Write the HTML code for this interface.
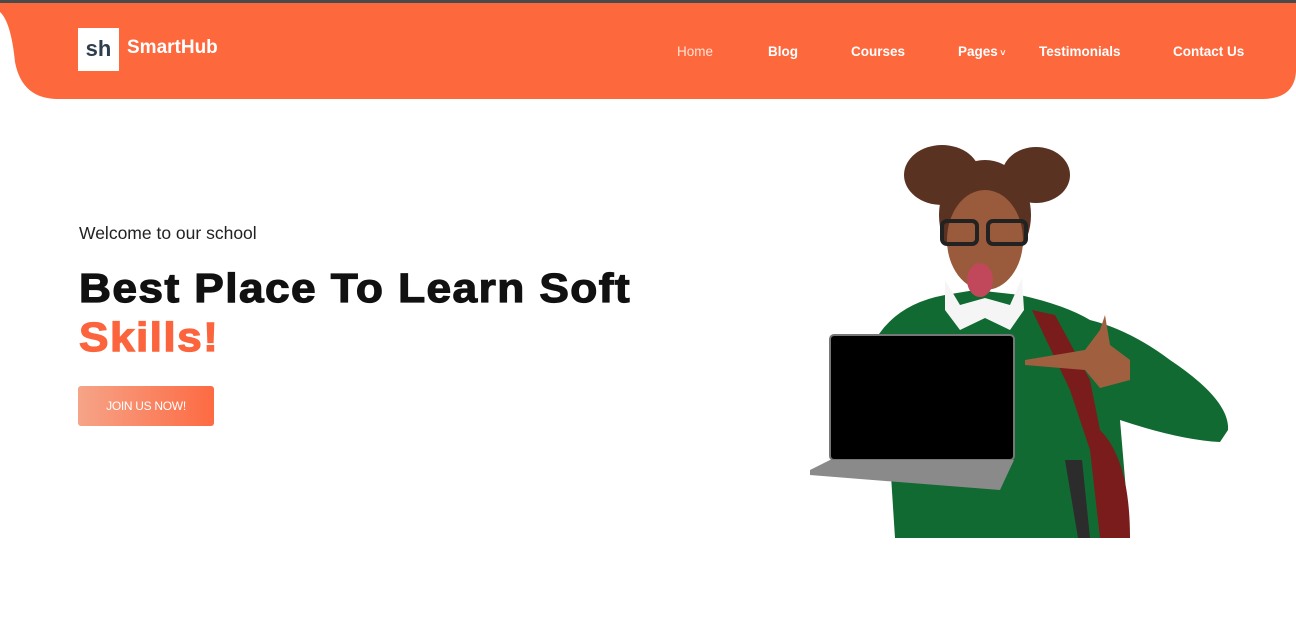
<!DOCTYPE html>
<html><head><meta charset="utf-8"><style>
*{margin:0;padding:0;box-sizing:border-box}
body{width:1296px;height:618px;overflow:hidden;background:#fff;font-family:"Liberation Sans",Arial,sans-serif;position:relative}
.top{position:absolute;left:0;top:0;width:1296px;height:3px;background:#4a4a4a}
.logo{position:absolute;left:78px;top:28px;width:41px;height:43px;background:#fff;color:#2f3e4d;font-weight:bold;font-size:22px;text-align:center;line-height:42px}
.brand{position:absolute;left:127px;top:37px;color:#fff;font-weight:bold;font-size:19px}
.nav a{position:absolute;top:44px;color:#fff;font-size:13.5px;font-weight:bold;text-decoration:none}
.wel{position:absolute;left:79px;top:223px;font-size:17.5px;color:#222}
h1{position:absolute;left:79px;top:264px;font-size:41px;line-height:49px;font-weight:900;color:#111;letter-spacing:1.3px;transform:scaleX(1.08);transform-origin:left;-webkit-text-stroke:1.2px #111;white-space:nowrap}
h1 span{color:#fb643c;-webkit-text-stroke:1.2px #fb643c}
.btn{position:absolute;left:78px;top:386px;width:136px;height:40px;border-radius:3px;background:linear-gradient(90deg,#f6a488,#fd6a42);color:#fff;font-size:12px;text-align:center;line-height:40px;letter-spacing:-.3px}
</style></head><body>
<svg width="1296" height="110" style="position:absolute;left:0;top:0">
<path d="M0,3 L1296,3 L1296,72 Q1294,99 1262,99 L58,99 Q22,99 15,62 Q11,22 0,12 Z" fill="#fe683d"/>
</svg>
<div class="top"></div>
<div class="logo">sh</div>
<div class="brand">SmartHub</div>
<div class="nav">
<a style="left:677px;color:#ffe2d6;font-weight:normal">Home</a>
<a style="left:768px">Blog</a>
<a style="left:851px">Courses</a>
<a style="left:958px">Pages<span style="font-size:9px"> ˅</span></a>
<a style="left:1039px">Testimonials</a>
<a style="left:1173px">Contact Us</a>
</div>
<div class="wel">Welcome to our school</div>
<h1>Best Place To Learn Soft<br><span>Skills!</span></h1>
<div class="btn">JOIN US NOW!</div>
<svg width="440" height="420" viewBox="0 0 440 420" style="position:absolute;left:800px;top:130px">
<path d="M95,408 L90,330 Q40,330 40,300 L70,220 Q90,175 145,165 L175,160 L220,165 Q265,175 290,190 Q330,200 370,230 Q430,270 428,300 L420,312 Q380,310 320,290 L330,408 Z" fill="#116a31"/>
<path d="M232,180 L255,185 L290,250 L300,300 Q330,330 330,408 L300,408 L290,320 L270,260 Z" fill="#7a1c1c"/>
<path d="M265,330 L278,408 L290,408 L282,330 Z" fill="#2c2c2c"/>
<ellipse cx="142" cy="45" rx="38" ry="30" fill="#5a3222"/>
<ellipse cx="236" cy="45" rx="34" ry="28" fill="#5a3222"/>
<ellipse cx="185" cy="85" rx="46" ry="55" fill="#5a3222"/>
<ellipse cx="185" cy="110" rx="38" ry="50" fill="#9a5a3c"/>
<rect x="142" y="91" width="35" height="23" rx="5" fill="none" stroke="#222" stroke-width="4"/>
<rect x="188" y="91" width="38" height="23" rx="5" fill="none" stroke="#222" stroke-width="4"/>
<ellipse cx="180" cy="150" rx="13" ry="17" fill="#c0485a"/>
<path d="M145,150 L160,175 L185,168 L210,175 L222,148 L224,180 L210,200 L185,188 L160,200 L145,180 Z" fill="#f5f5f5"/>
<path d="M225,230 L285,220 L300,200 L305,185 L310,215 L330,230 L330,250 L300,258 L285,240 L225,235 Z" fill="#a06040"/>
<rect x="30" y="205" width="184" height="125" rx="4" fill="#000" stroke="#777" stroke-width="2"/>
<path d="M10,340 L30,330 L214,330 L200,360 L10,345 Z" fill="#8a8a8a"/>
</svg>
</body></html>
